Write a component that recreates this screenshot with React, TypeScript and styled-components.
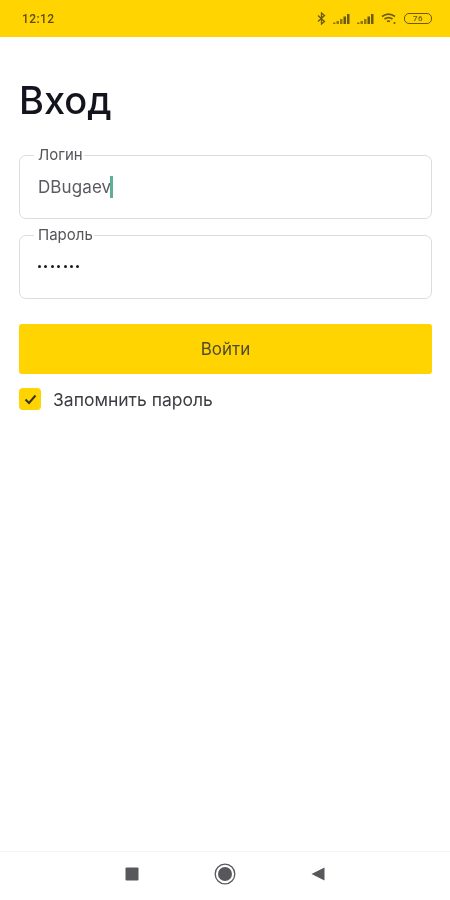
import React from "react";
import styled, { createGlobalStyle } from "styled-components";

const GlobalStyle = createGlobalStyle`
    html, body {
        margin: 0;
        padding: 0;
        background: #fff;
        font-family: Inter, Roboto, sans-serif;
    }
`;

const Screen = styled.div`
    width: 450px;
    height: 900px;
    display: flex;
    flex-direction: column;
    overflow: hidden;
    background: #fff;
    filter: blur(0.7px);
`;

const StatusBar = styled.div`
    height: 37px;
    flex: none;
    display: flex;
    align-items: center;
    padding: 0 18px 0 22px;
    background: #ffd400;
    color: #5c4c10;
    font-family: Roboto, sans-serif;
    font-size: 12px;
    font-weight: 500;
    letter-spacing: 0.4px;
`;

const StatusIcons = styled.div`
    margin-left: auto;
    display: flex;
    align-items: center;
    gap: 7px;
    color: #6b5a10;
`;

const Battery = styled.div`
    width: 28px;
    height: 11px;
    box-sizing: border-box;
    border: 1px solid #6b5a10;
    border-radius: 5px;
    display: flex;
    align-items: center;
    justify-content: center;
    font-size: 8px;
    line-height: 1;
`;

const Content = styled.main`
    flex: 1;
    display: flex;
    flex-direction: column;
    padding: 41px 18px 0 19px;
`;

const Title = styled.h1`
    margin: 0 0 25px;
    font-size: 38px;
    line-height: 44px;
    font-weight: 500;
    color: #14141f;
`;

const Fields = styled.div`
    display: flex;
    flex-direction: column;
    gap: 8px;
`;

const Field = styled.fieldset`
    margin: 0;
    height: 72px;
    box-sizing: border-box;
    padding: 0 0 0 14px;
    border: 1.5px solid #dcdcdc;
    border-radius: 7px;
    display: flex;
    flex-direction: column;
`;

const FieldLabel = styled.legend`
    padding: 0 1px 0 4px;
    margin-left: 0;
    font-size: 15px;
    line-height: 16px;
    color: #55555a;
`;

const FieldValue = styled.div`
    margin: 12px 0 0 4px;
    display: flex;
    align-items: center;
    height: 24px;
    font-size: 17px;
    letter-spacing: 0.1px;
    color: #5a5a60;
`;

const Caret = styled.span`
    width: 3px;
    height: 22px;
    margin-left: -1px;
    background: #5fae98;
`;

const Dots = styled.div`
    margin: 11px 0 0 4px;
    height: 24px;
    display: flex;
    align-items: center;
    gap: 3.4px;
`;

const Dot = styled.span`
    width: 3px;
    height: 3px;
    border-radius: 50%;
    background: #1a1a1f;
`;

const SubmitButton = styled.button`
    height: 50px;
    margin-top: 25px;
    border: none;
    border-radius: 3px;
    background: #ffd400;
    color: #4f4a30;
    font-family: inherit;
    font-size: 17px;
    font-weight: 400;
`;

const Remember = styled.label`
    margin-top: 14px;
    display: flex;
    align-items: center;
    gap: 12px;
    font-size: 17.5px;
    color: #3c3c42;
`;

const CheckBox = styled.span`
    width: 22px;
    height: 22px;
    border-radius: 4px;
    background: #ffd400;
    display: flex;
    align-items: center;
    justify-content: center;
`;

const NavBar = styled.nav`
    height: 44px;
    flex: none;
    border-top: 1px solid #f4f4f4;
    display: flex;
    align-items: center;
    justify-content: center;
    gap: 75px;
    padding: 0 1px 4px 0;
`;

const NavIcon = styled.svg`
    display: block;
    color: #58585c;
`;

const SignalIcon = () => (
    <svg width="17" height="12" viewBox="0 0 17 12">
        <path d="M0 11h2.500v-1.500H0zM3.500 11H6V8H3.500zM7 11h2.500V6H7z" fill="currentColor" opacity=".75" />
        <path d="M10.500 11H13V3.500h-2.500zM14 11h2.500V1H14z" fill="currentColor" />
    </svg>
);

const password = Array.from({ length: 7 });

export default function App() {
    return (
        <Screen>
            <GlobalStyle />
            <StatusBar>
                12:12
                <StatusIcons>
                    <svg width="9" height="13" viewBox="0 0 9 13" fill="none" stroke="currentColor" strokeWidth="1.300">
                        <path d="M1 3.500l6.500 6L4.500 12V1l3 2.500-6.500 6" />
                    </svg>
                    <SignalIcon />
                    <SignalIcon />
                    <svg width="16" height="12" viewBox="0 0 16 12" fill="none" stroke="currentColor" strokeWidth="1.600">
                        <path d="M1 3.500c4-3 9-3 13 0M3.500 6c2.500-1.800 5.500-1.800 8 0M6 8.500c1-.7 2-.7 3 0" />
                        <circle cx="13.500" cy="10" r="1" fill="currentColor" stroke="none" />
                    </svg>
                    <Battery>76</Battery>
                </StatusIcons>
            </StatusBar>

            <Content>
                <Title>Вход</Title>
                <Fields>
                    <Field>
                        <FieldLabel>Логин</FieldLabel>
                        <FieldValue>
                            DBugaev
                            <Caret />
                        </FieldValue>
                    </Field>
                    <Field>
                        <FieldLabel>Пароль</FieldLabel>
                        <Dots>
                            {password.map((_, i) => (
                                <Dot key={i} />
                            ))}
                        </Dots>
                    </Field>
                </Fields>
                <SubmitButton>Войти</SubmitButton>
                <Remember>
                    <CheckBox>
                        <svg width="13" height="11" viewBox="0 0 13 11" fill="none" stroke="#3a3320" strokeWidth="2">
                            <path d="M1.500 5.500l3.500 3.500 6.500-7.500" />
                        </svg>
                    </CheckBox>
                    Запомнить пароль
                </Remember>
            </Content>

            <NavBar>
                <NavIcon width="14" height="14" viewBox="0 0 14 14">
                    <rect x="0.500" y="0.500" width="13" height="13" rx="1" fill="currentColor" />
                </NavIcon>
                <NavIcon width="22" height="22" viewBox="0 0 22 22">
                    <circle cx="11" cy="11" r="9.800" fill="none" stroke="currentColor" strokeWidth="1.300" />
                    <circle cx="11" cy="11" r="7" fill="currentColor" />
                </NavIcon>
                <NavIcon width="14" height="14" viewBox="0 0 14 14">
                    <path d="M13.500 0.500v13L0.500 7z" fill="currentColor" />
                </NavIcon>
            </NavBar>
        </Screen>
    );
}
